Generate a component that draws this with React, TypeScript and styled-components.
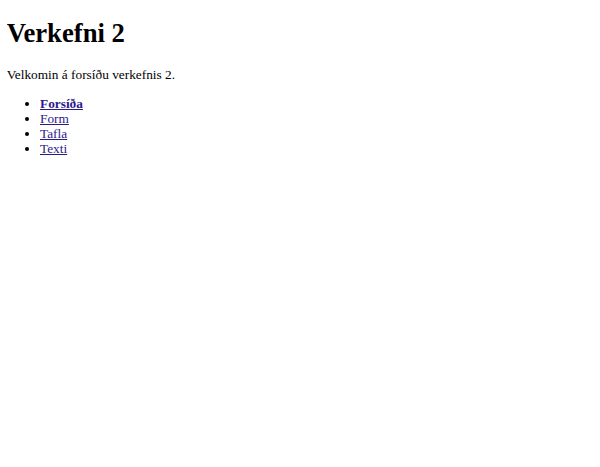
import React from "react";
import styled, { createGlobalStyle } from "styled-components";

const Global = createGlobalStyle`
  body {
    margin: 0 6.67px 6.67px;
    font-family: "Liberation Serif", "Times New Roman", serif;
    font-size: 13.33px;
    color: #000;
    background: #fff;
  }
`;

const Title = styled.h1`
  font-size: 26.67px;
  font-weight: bold;
  margin: 17.87px 0 18.5px;
  line-height: 1.15;
`;

const Intro = styled.p`
  margin: 13.33px 0;
  line-height: 1.15;
`;

const Nav = styled.ul`
  margin: 13.33px 0;
  padding-left: 33.33px;
  list-style: disc;
  line-height: 15px;
`;

const Item = styled.li``;

const NavLink = styled.a<{ $active?: boolean }>`
  color: #2d1a8a;
  text-decoration: underline;
  font-weight: ${(p) => (p.$active ? "bold" : "normal")};
`;

const links = [
  { label: "Forsíða", active: true },
  { label: "Form" },
  { label: "Tafla" },
  { label: "Texti" },
];

export default function App() {
  return (
    <>
      <Global />
      <Title>Verkefni 2</Title>
      <Intro>Velkomin á forsíðu verkefnis 2.</Intro>
      <Nav>
        {links.map((l) => (
          <Item key={l.label}>
            <NavLink href="#" $active={l.active}>
              {l.label}
            </NavLink>
          </Item>
        ))}
      </Nav>
    </>
  );
}
